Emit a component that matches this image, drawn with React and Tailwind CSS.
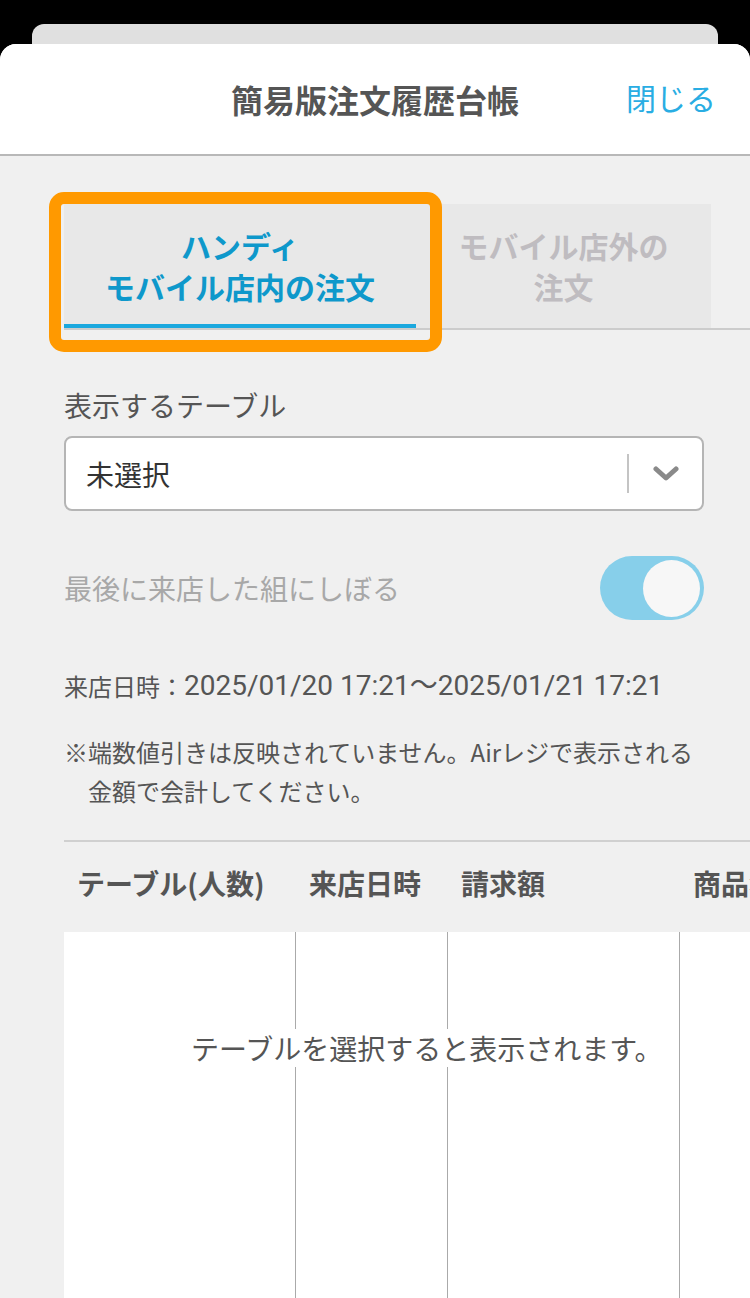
import React from 'react';

const font = { fontFamily: '"Noto Sans CJK JP", "Noto Sans", sans-serif' };
const latin = { fontFamily: 'Roboto, "Noto Sans CJK JP", sans-serif' };

const Toggle = () => (
    <div className="w-[104px] h-[64px] rounded-full bg-[#87cfea] flex items-center justify-end pr-[4px] shrink-0">
        <div className="w-[57px] h-[57px] rounded-full bg-[#f7f7f7]"></div>
    </div>
);

const App = () => {
    const cols = [
        { label: 'テーブル(人数)', w: 'w-[232px]' },
        { label: '来店日時', w: 'w-[152px]' },
        { label: '請求額', w: 'w-[232px]' },
        { label: '商品名', w: 'w-[232px]' },
    ];

    return (
        <div className="w-[750px] h-[1298px] bg-black pt-[24px] overflow-hidden" style={font}>
            <div className="mx-[32px] h-[40px] bg-[#e0e0e0] rounded-t-[12px]"></div>
            <div className="-mt-[20px] h-[1254px] rounded-t-[16px] bg-[#f0f0f0] overflow-hidden flex flex-col">
                <header className="h-[112px] shrink-0 bg-white border-b-2 border-[#b8b8b8] flex items-center relative">
                    <h1 className="w-full text-center text-[32px] font-bold text-[#555] leading-none">簡易版注文履歴台帳</h1>
                    <button className="absolute right-[34px] top-[38px] text-[30px] leading-none text-[#29ade3]">閉じる</button>
                </header>

                <div className="pl-[64px] flex-1 flex flex-col">
                    {/* tabs */}
                    <div className="mt-[48px] flex border-b-2 border-[#cccccc] relative">
                        <div className="w-[352px] h-[124px] bg-[#e8e8e8] flex items-center justify-center relative">
                            <p className="text-center text-[30px] font-bold leading-[41px] text-[#0e98cb]">ハンディ<br />モバイル店内の注文</p>
                            <div className="absolute left-0 right-0 bottom-0 h-[4px] bg-[#1ba8de]"></div>
                        </div>
                        <div className="w-[295px] h-[124px] bg-[#e8e8e8] flex items-center justify-center">
                            <p className="text-center text-[30px] font-bold leading-[41px] text-[#bfbcc0]">モバイル店外の<br />注文</p>
                        </div>
                        {/* highlight annotation */}
                        <div className="absolute left-[-15px] top-[-12px] w-[393px] h-[160px] border-[12px] border-[#ff9900] rounded-[15px] pointer-events-none"></div>
                    </div>

                    <p className="mt-[57px] text-[28px] leading-[36px] text-[#555]">表示するテーブル</p>
                    <div className="mt-[13px] w-[640px] h-[75px] bg-white border-2 border-[#b5b5b5] rounded-[8px] flex items-center">
                        <span className="flex-1 pl-[20px] text-[28px] text-[#333]">未選択</span>
                        <div className="w-[2px] h-[39px] bg-[#c4c4c4]"></div>
                        <div className="w-[73px] flex items-center justify-center">
                            <svg width="26" height="16" viewBox="0 0 26 16" fill="none">
                                <path d="M3 3 L13 12 L23 3" stroke="#8a8a8a" strokeWidth="5" strokeLinecap="round" strokeLinejoin="round" />
                            </svg>
                        </div>
                    </div>

                    <div className="mt-[45px] w-[640px] flex items-center justify-between">
                        <span className="text-[28px] text-[#a8a8a8]">最後に来店した組にしぼる</span>
                        <Toggle />
                    </div>

                    <p className="mt-[48px] h-[36px] text-[24px] leading-[36px] text-[#555] whitespace-nowrap flex items-center">
                        来店日時：<span className="text-[28px] leading-[36px]" style={latin}>2025/01/20 17:21〜2025/01/21 17:21</span>
                    </p>

                    <div className="mt-[28px] text-[24px] leading-[39px] text-[#555] flex">
                        <span>※</span>
                        <span className="w-[610px]">端数値引きは反映されていません。Airレジで表示される金額で会計してください。</span>
                    </div>

                    <div className="mt-[30px] border-t-2 border-[#d0d0d0]"></div>

                    {/* table */}
                    <div className="flex-1 flex flex-col overflow-hidden">
                        <div className="h-[90px] flex items-center shrink-0">
                            {cols.map((c) => (
                                <div key={c.label} className={`${c.w} shrink-0 pl-[13px] text-[28px] font-bold text-[#555] whitespace-nowrap pb-[8px]`}>{c.label}</div>
                            ))}
                        </div>
                        <div className="flex-1 bg-white flex relative">
                            {cols.map((c, i) => (
                                <div key={c.label} className={`${c.w} shrink-0 ${i < cols.length - 1 ? 'border-r border-[#aaaaaa]' : ''}`}></div>
                            ))}
                            <p className="absolute left-[127px] top-[97px] bg-white text-[28px] leading-[38px] text-[#555] whitespace-nowrap">テーブルを選択すると表示されます。</p>
                        </div>
                    </div>
                </div>
            </div>
        </div>
    );
};

export default App;
